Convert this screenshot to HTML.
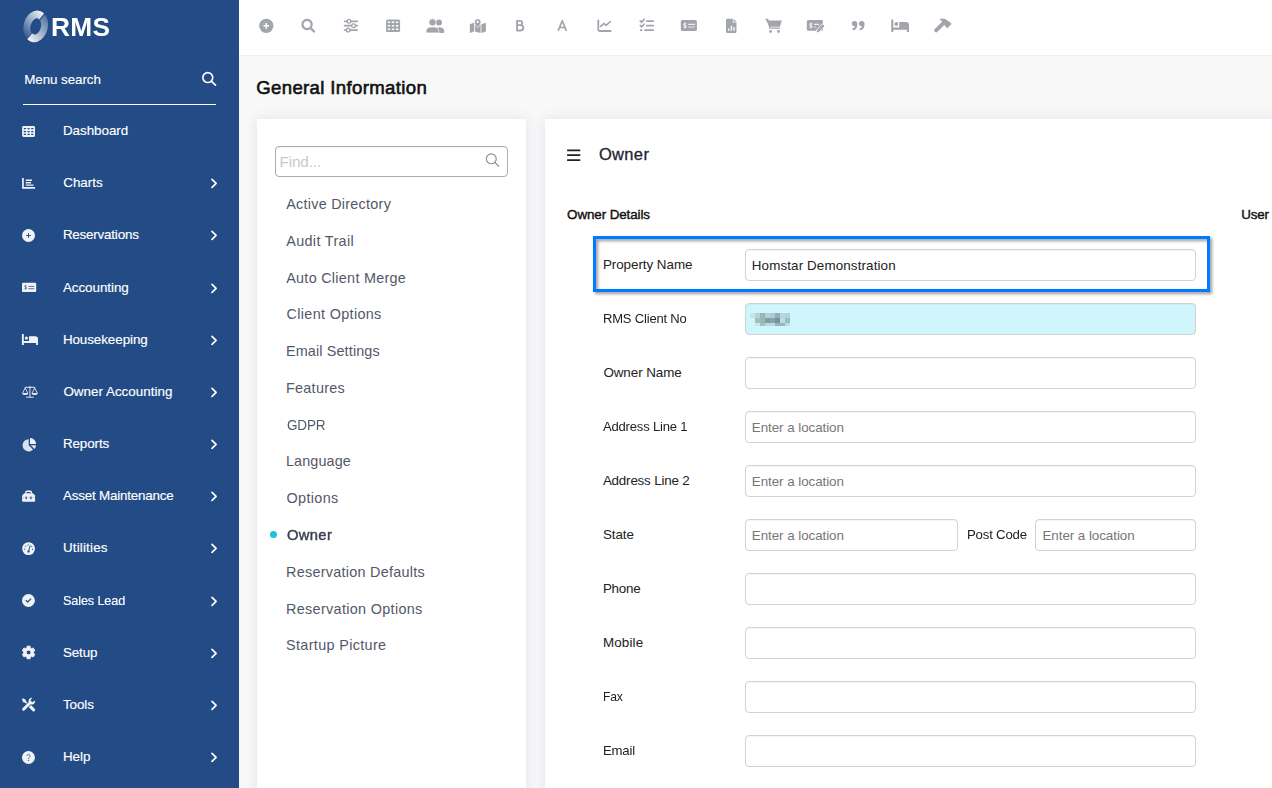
<!DOCTYPE html>
<html><head><meta charset="utf-8"><title>RMS</title>
<style>
html,body{margin:0;padding:0}
body{width:1272px;height:788px;overflow:hidden;position:relative;background:#f8f8f9;font-family:'Liberation Sans',sans-serif}
.t{position:absolute;transform-origin:0 50%;white-space:nowrap;line-height:20px;font-family:'Liberation Sans',sans-serif}
.abs{position:absolute}
#side{position:absolute;left:0;top:0;width:239px;height:788px;background:#234b85}
#bar{position:absolute;left:239px;top:0;width:1033px;height:55px;background:#fff;border-bottom:1px solid #eeeef3}
.panel{position:absolute;background:#fff;box-shadow:0 0 12px rgba(70,60,100,.12)}
.inp{position:absolute;height:30px;border:1px solid #d2d2d2;border-radius:4px;background:#fff;box-shadow:inset 0 1px 1px rgba(0,0,0,.04)}

</style></head>
<body>
<div id="side"></div>
<div id="bar"></div>
<div class="abs" style="left:23px;top:104px;width:193px;height:1px;background:#fff"></div>
<div class="panel" style="left:257px;top:119px;width:269px;height:700px"></div>
<div class="panel" style="left:545px;top:119px;width:760px;height:700px"></div>
<div class="inp" style="left:275px;top:146px;width:231px;height:29px;border-color:#adadad"></div>
<div class="inp" style="left:745px;top:249px;width:449px"></div>
<div class="inp" style="left:745px;top:303px;width:449px;background:#cff7fb;border-color:#cdd3d3"></div>
<div class="inp" style="left:745px;top:357px;width:449px"></div>
<div class="inp" style="left:745px;top:411px;width:449px"></div>
<div class="inp" style="left:745px;top:465px;width:449px"></div>
<div class="inp" style="left:745px;top:519px;width:211px"></div>
<div class="inp" style="left:1035px;top:519px;width:159px"></div>
<div class="inp" style="left:745px;top:573px;width:449px"></div>
<div class="inp" style="left:745px;top:627px;width:449px"></div>
<div class="inp" style="left:745px;top:681px;width:449px"></div>
<div class="inp" style="left:745px;top:735px;width:449px"></div>
<div class="abs" style="left:593px;top:236px;width:611px;height:50px;border:3px solid #007bff;filter:drop-shadow(2px 2px 1.700px rgba(0,0,0,.42))"></div>
<div class="abs" style="left:270.200px;top:531.300px;width:7.200px;height:7.200px;border-radius:50%;background:#17c5d6"></div>
<svg class="abs" style="left:0;top:0" width="239" height="788" viewBox="0 0 239 788" fill="#fff">
<defs>
<linearGradient id="lgA" gradientUnits="userSpaceOnUse" x1="42" y1="12" x2="25" y2="38"><stop offset="0" stop-color="#fff" stop-opacity=".97"/><stop offset=".4" stop-color="#fff" stop-opacity=".6"/><stop offset="1" stop-color="#fff" stop-opacity=".05"/></linearGradient>
<linearGradient id="lgB" gradientUnits="userSpaceOnUse" x1="29" y1="41" x2="47" y2="15"><stop offset="0" stop-color="#fff" stop-opacity=".98"/><stop offset=".5" stop-color="#fff" stop-opacity=".58"/><stop offset="1" stop-color="#fff" stop-opacity=".2"/></linearGradient>
<clipPath id="cpA"><path d="M0 0H51L51 4.300L39.600 19.300L31.700 32.700L20.500 46H0z"/></clipPath>
<clipPath id="cpB"><path d="M60 0H52.300L52.300 4.300L40.500 19.900L32.500 33L21.500 46H60z"/></clipPath>
</defs>
<g fill-rule="evenodd"><g clip-path="url(#cpA)"><path transform="rotate(14 35.700 26.400)" fill="url(#lgA)" d="M35.7 10.399999999999999a12.1 16.0 0 1 0 0 32.0a12.1 16.0 0 1 0 0 -32.0zM35.7 18.2a5.2 8.2 0 1 1 0 16.4a5.2 8.2 0 1 1 0 -16.4z"/></g><g clip-path="url(#cpB)"><path transform="rotate(14 35.700 26.400)" fill="url(#lgB)" d="M35.7 10.399999999999999a12.1 16.0 0 1 0 0 32.0a12.1 16.0 0 1 0 0 -32.0zM35.7 18.2a5.2 8.2 0 1 1 0 16.4a5.2 8.2 0 1 1 0 -16.4z"/></g></g>
<circle cx="207.800" cy="77.600" r="4.950" fill="none" stroke="#fff" stroke-width="1.600"/><path d="M211.500 81.300l4 3.900" stroke="#fff" stroke-width="1.700" stroke-linecap="round"/>
<path d="M212 179.3l4.100 4l-4.100 4" fill="none" stroke="#fff" stroke-width="1.700" stroke-linecap="round" stroke-linejoin="round"/>
<path d="M212 231.3l4.100 4l-4.100 4" fill="none" stroke="#fff" stroke-width="1.700" stroke-linecap="round" stroke-linejoin="round"/>
<path d="M212 284.3l4.100 4l-4.100 4" fill="none" stroke="#fff" stroke-width="1.700" stroke-linecap="round" stroke-linejoin="round"/>
<path d="M212 336.3l4.100 4l-4.100 4" fill="none" stroke="#fff" stroke-width="1.700" stroke-linecap="round" stroke-linejoin="round"/>
<path d="M212 388.3l4.100 4l-4.100 4" fill="none" stroke="#fff" stroke-width="1.700" stroke-linecap="round" stroke-linejoin="round"/>
<path d="M212 440.3l4.100 4l-4.100 4" fill="none" stroke="#fff" stroke-width="1.700" stroke-linecap="round" stroke-linejoin="round"/>
<path d="M212 492.3l4.100 4l-4.100 4" fill="none" stroke="#fff" stroke-width="1.700" stroke-linecap="round" stroke-linejoin="round"/>
<path d="M212 544.3l4.100 4l-4.100 4" fill="none" stroke="#fff" stroke-width="1.700" stroke-linecap="round" stroke-linejoin="round"/>
<path d="M212 597.3l4.100 4l-4.100 4" fill="none" stroke="#fff" stroke-width="1.700" stroke-linecap="round" stroke-linejoin="round"/>
<path d="M212 649.3l4.100 4l-4.100 4" fill="none" stroke="#fff" stroke-width="1.700" stroke-linecap="round" stroke-linejoin="round"/>
<path d="M212 701.3l4.100 4l-4.100 4" fill="none" stroke="#fff" stroke-width="1.700" stroke-linecap="round" stroke-linejoin="round"/>
<path d="M212 753.3l4.100 4l-4.100 4" fill="none" stroke="#fff" stroke-width="1.700" stroke-linecap="round" stroke-linejoin="round"/>
<g opacity=".93">
<path fill-rule="evenodd" d="M23.500 125.900h10.100a1.400 1.400 0 0 1 1.400 1.400v8.300a1.400 1.400 0 0 1-1.400 1.400h-10.100a1.400 1.400 0 0 1-1.400-1.400v-8.300a1.400 1.400 0 0 1 1.400-1.400z
M23.800 128h2.200v1.300h-2.200zM27.500 128h2.200v1.300h-2.200zM31.200 128h2.200v1.300h-2.200z
M23.800 130.900h2.200v1.300h-2.200zM27.500 130.900h2.200v1.300h-2.200zM31.200 130.900h2.200v1.300h-2.200z
M23.800 133.800h2.200v1.300h-2.200zM27.500 133.800h2.200v1.300h-2.200zM31.200 133.800h2.200v1.300h-2.200z"/>
<path d="M22.100 177.900h1.700v9.200h11.200v1.700h-12.900z"/><path d="M25.700 179.600h6.300v1.400h-6.300zM25.700 182h5.300v1.400h-5.300zM25.700 184.400h7.800v1.400h-7.800z"/>
<circle cx="28.500" cy="235.500" r="6.500"/><path d="M26.100 235.500h4.800M28.500 233.100v4.800" stroke="#234b85" stroke-width=".95" fill="none"/>
<rect x="22" y="282.800" width="14.200" height="9.300" rx="1.200"/><path d="M26.600 286c-.4-.5-2-.6-2 .4c0 1.100 2.100.5 2.100 1.700c0 1-1.700 1-2.300.4M25.600 285.100v4.600" fill="none" stroke="#234b85" stroke-width=".65" stroke-opacity=".8"/><path d="M28.400 286.400h5.900M28.400 288.700h5.900" stroke="#234b85" stroke-width=".85" stroke-opacity=".85" fill="none"/>
<path d="M21.900 334h1.900v7.100h14.200v3.900h-1.900v-1.900h-12.300v1.900h-1.900z"/><circle cx="26.400" cy="338.100" r="1.600"/><path d="M29 336.300h6.300a2.700 2.700 0 0 1 2.700 2.700v2.600h-9z"/>
<g fill="none" stroke="#fff" stroke-width=".95"><path d="M29.950 386v10.800M24.700 387.300h10.500M26.200 397.200h7.500"/><path d="M22.600 393l2.600-5l2.600 5M32.100 393l2.600-5l2.600 5" stroke-linejoin="round" stroke-width=".85"/></g>
<path d="M22.200 393h6a3 2.100 0 0 1-6 0zM31.700 393h6a3 2.100 0 0 1-6 0z" fill-opacity=".92"/>
<path d="M28.700 439.200v6.100l4.300 4.300a6.100 6.100 0 1 1-4.300-10.400z" fill-opacity=".9"/><path d="M30 437.900a6.100 6.100 0 0 1 6.100 6.100h-6.100z"/><path d="M30.700 445.300h5.400a6.100 6.100 0 0 1-1.600 3.800z" fill-opacity=".9"/>
<path d="M25.900 493.600v-1.300a1.100 1.100 0 0 1 1.100-1.100h3.200a1.100 1.100 0 0 1 1.100 1.100v1.300" fill="none" stroke="#fff" stroke-width="1.400"/><path d="M24.300 493.200h8.600l2.200 2.200v5.600a.8.800 0 0 1-.8.800h-11.400a.8.800 0 0 1-.8-.8v-5.600z"/><path d="M22.100 497.700h13" stroke="#234b85" stroke-width=".5" stroke-opacity=".4"/><path d="M26.200 496.500v2.700M30.900 496.500v2.700" stroke="#234b85" stroke-width="1.200"/>
<circle cx="28.550" cy="548.600" r="6.400"/><path d="M28.600 551.300l1.500-5.600" stroke="#234b85" stroke-width=".95" stroke-linecap="round"/><circle cx="28.550" cy="551.500" r="1.150" fill="#234b85"/><g fill="#234b85"><circle cx="24.600" cy="549.200" r=".6"/><circle cx="25.700" cy="546.200" r=".6"/><circle cx="28.100" cy="544.800" r=".6"/><circle cx="32.500" cy="549.200" r=".6"/><circle cx="31.700" cy="546.500" r=".6"/></g>
<circle cx="28.450" cy="600.450" r="6.450"/><path d="M26.100 600.500l1.600 1.500l3.100-3.100" fill="none" stroke="#234b85" stroke-width="1.200" stroke-linecap="round" stroke-linejoin="round"/>
<path d="M27.05 646.14L30.15 646.14L30.37 647.88L31.67 648.63L33.30 647.96L34.84 650.63L33.44 651.70L33.44 653.20L34.84 654.27L33.30 656.94L31.67 656.27L30.37 657.02L30.15 658.76L27.05 658.76L26.83 657.02L25.53 656.27L23.90 656.94L22.36 654.27L23.76 653.20L23.76 651.70L22.36 650.63L23.90 647.96L25.53 648.63L26.83 647.88z" stroke="#fff" stroke-width=".9" stroke-linejoin="round"/><circle cx="28.6" cy="652.45" r="1.900" fill="#234b85"/>
<path d="M23 699.400l5.200 5.200" stroke="#fff" stroke-width="1.700" stroke-linecap="round"/>
<path d="M22.200 699.400l1.100-1l2.300 1.300l.2 1.400l-1.300 1.300l-1.400-.2z"/>
<path d="M29.600 705.900l4 4" stroke="#fff" stroke-width="3.100" stroke-linecap="round"/>
<path d="M23.600 709.300l6.600-6.600" stroke="#234b85" stroke-width="4.300" stroke-linecap="round"/>
<path d="M23.600 709.300l6.800-6.800" stroke="#fff" stroke-width="3" stroke-linecap="round"/>
<path d="M35.100 700.600a3.300 3.300 0 1 1-2.700-2.700l-1.800 1.800l.4 1.800l1.800.4z"/>
<circle cx="28.450" cy="757.500" r="6.500"/><g opacity=".8"><path d="M26.900 756a1.600 1.600 0 1 1 2.400 1.400c-.6.400-.8.700-.8 1.500" fill="none" stroke="#234b85" stroke-width="1"/><circle cx="28.500" cy="760.400" r=".7" fill="#234b85"/></g>
</g>
</svg>
<svg class="abs" style="left:239px;top:0" width="1033" height="55" viewBox="239 0 1033 55" fill="#a2a5ab">
<!-- plus-circle -->
<circle cx="266.3" cy="25.85" r="7.15"/>
<path d="M263.5 25.85h5.6M266.3 23.05v5.6" stroke="#fff" stroke-width="1.5" fill="none"/>
<!-- search -->
<path transform="translate(301.4,18.8) scale(0.02734)" d="M505 442.700L405.300 343c-4.500-4.500-10.600-7-17-7H372c27.600-35.300 44-79.700 44-128C416 93.100 322.900 0 208 0S0 93.100 0 208s93.100 208 208 208c48.300 0 92.700-16.400 128-44v16.300c0 6.400 2.500 12.500 7 17l99.700 99.700c9.400 9.400 24.600 9.400 33.900 0l28.300-28.300c9.400-9.400 9.400-24.600.1-34zM208 336c-70.700 0-128-57.200-128-128 0-70.700 57.200-128 128-128 70.700 0 128 57.200 128 128 0 70.700-57.200 128-128 128z"/>
<!-- sliders -->
<g stroke="#a2a5ab" fill="none" stroke-linecap="round">
<path d="M344.6 21.3h12.6M344.6 25.7h12.6M344.6 30.1h12.6" stroke-width="1.7"/>
<g fill="#fff" stroke-width="1.35"><circle cx="349" cy="21.3" r="1.85"/><circle cx="353.6" cy="25.7" r="1.85"/><circle cx="348.2" cy="30.1" r="1.85"/></g>
</g>
<!-- table -->
<path fill-rule="evenodd" d="M387.5 19.4h11.100a1.500 1.500 0 0 1 1.500 1.500v9.500a1.500 1.500 0 0 1-1.500 1.500h-11.100a1.500 1.500 0 0 1-1.500-1.500v-9.500a1.500 1.500 0 0 1 1.500-1.500z
M387.7 21.6h2.400v1.500h-2.400zM391.800 21.6h2.400v1.500h-2.400zM395.900 21.6h2.400v1.500h-2.400z
M387.7 25h2.400v1.500h-2.400zM391.800 25h2.400v1.500h-2.400zM395.900 25h2.400v1.500h-2.400z
M387.7 28.5h2.400v1.500h-2.400zM391.800 28.5h2.400v1.500h-2.400zM395.900 28.5h2.400v1.500h-2.400z"/>
<!-- users -->
<circle cx="439" cy="22.6" r="3"/>
<path d="M437 27.400h3.400a3.800 3.800 0 0 1 3.800 3.800v1a.7.700 0 0 1-.7.700H437z"/>
<circle cx="432.5" cy="22.3" r="3.600" stroke="#fff" stroke-width=".7"/>
<path d="M426 32.900v-1.600a4.300 4.300 0 0 1 4.300-4.300h4.200a4.300 4.300 0 0 1 4.300 4.300v1.600z" stroke="#fff" stroke-width=".7"/>
<!-- map-marked -->
<path d="M469.800 24.200L474 22.700V31.400L469.800 32.900zM474.800 22.700L480.600 24.500V32.900L474.800 31.400zM481.400 24.300L485.900 22.700V31.400L481.400 32.900z"/>
<path d="M477.700 18.800a3.300 3.300 0 0 1 3.300 3.300c0 2-2.300 4.300-3.300 5.600c-1-1.300-3.300-3.600-3.300-5.600a3.300 3.300 0 0 1 3.300-3.300z" stroke="#fff" stroke-width=".7"/>
<circle cx="477.700" cy="21.900" r="1.150" fill="#fff"/>
<!-- B -->
<path d="M517.050 25.150V20.850h3.050a2.150 2.150 0 0 1 0 4.300H517.050h3.650a2.650 2.650 0 0 1 0 5.300H517.050z" fill="none" stroke="#a2a5ab" stroke-width="1.850" stroke-linejoin="round"/>
<!-- A -->
<path d="M558.100 30.900L562.250 20.700L566.400 30.900M559.700 27.500h5.100" fill="none" stroke="#a2a5ab" stroke-width="1.700" stroke-linejoin="round"/>
<!-- chart-line -->
<path d="M598.300 20.300v9.300a1.400 1.400 0 0 0 1.400 1.400h11" fill="none" stroke="#a2a5ab" stroke-width="1.800" stroke-linecap="round"/>
<path d="M600.700 26.400l3.300-3.100l2.100 2l4.200-3.800" fill="none" stroke="#a2a5ab" stroke-width="1.600" stroke-linecap="round" stroke-linejoin="round"/>
<!-- tasks -->
<g fill="none" stroke="#a2a5ab" stroke-linecap="round" stroke-linejoin="round">
<path d="M640.200 20.900l1.400 1.400l2.600-2.900M640.200 25.500l1.400 1.400l2.600-2.900" stroke-width="1.650"/>
<path d="M646.700 21.200h6.500M646.700 25.700h6.500M645 30.100h8.200" stroke-width="1.700"/>
</g>
<circle cx="641.100" cy="30.100" r="1.200"/>
<!-- money-check-alt -->
<rect x="680.800" y="20" width="16.100" height="11" rx="1.500"/>
<path d="M686.300 23.900c-.5-.6-2.600-.8-2.600.5c0 1.500 2.700.7 2.700 2.200c0 1.300-2.200 1.200-2.900.5M684.900 22.700v5.700" fill="none" stroke="#fff" stroke-width=".9"/>
<path d="M688.200 24.300h6.800" stroke="#fff" stroke-width="1" fill="none"/>
<path d="M688.200 27.100h6.800" stroke="#fff" stroke-opacity=".45" stroke-width="1.600" fill="none"/>
<!-- file-chart -->
<path d="M727.200 18.800h5.600v3.800h3.700v9.100a1.200 1.200 0 0 1-1.200 1.200h-8.100a1.200 1.200 0 0 1-1.200-1.200v-11.700a1.200 1.200 0 0 1 1.200-1.200zM733.600 18.800l2.900 3h-2.900z"/>
<path d="M728.800 30.700v-2.200M731.400 30.700v-5M734 30.700v-3.600" stroke="#fff" stroke-width="1.300" fill="none"/>
<!-- cart -->
<path d="M765.500 19.200h2.300l.5 1.200h13.500l-1.900 6.300h-10.200z"/>
<path d="M766 19.300h1.800l2 8.900h9.900" fill="none" stroke="#a2a5ab" stroke-width="1.200" stroke-linecap="round" stroke-linejoin="round"/>
<circle cx="770.600" cy="31.500" r="1.450"/><circle cx="778.500" cy="31.500" r="1.450"/>
<!-- money-check-edit -->
<rect x="806.800" y="20" width="16.200" height="10.800" rx="1.500"/>
<path d="M812.300 23.900c-.5-.6-2.600-.8-2.600.5c0 1.500 2.700.7 2.700 2.200c0 1.300-2.200 1.200-2.900.5M810.900 22.700v5.700" fill="none" stroke="#fff" stroke-width=".9"/>
<path d="M814 24.300h5" stroke="#fff" stroke-width="1" fill="none"/>
<path d="M814 27h2" stroke="#fff" stroke-opacity=".45" stroke-width="1.500" fill="none"/>
<path d="M822.500 23.700l2.500 2.300l-6 6.300l-3 .7l.6-3z" stroke="#fff" stroke-width=".9" stroke-linejoin="round"/>
<!-- quote-right -->
<circle cx="854.55" cy="23.600" r="2.700"/><path d="M857.25 23.600v1.300c0 3.200-1.700 5.200-4.600 5.400l-.35-1.700c1.700-.3 2.500-1.300 2.600-3z"/>
<circle cx="861.7" cy="23.600" r="2.700"/><path d="M864.4000000000001 23.600v1.300c0 3.200-1.700 5.200-4.600 5.400l-.35-1.700c1.700-.3 2.500-1.300 2.600-3z"/>
<!-- bed -->
<path d="M891.200 19.500h2.100v8h15.700v4.400h-2.100v-2.100h-13.600v2.100h-2.100z"/>
<circle cx="896.300" cy="24" r="1.900"/>
<path d="M899.200 22h6.800a3 3 0 0 1 3 3v3h-9.800z"/>
<!-- hammer -->
<g transform="translate(935.500,31.100) rotate(45)">
<path d="M0 -.9L0 -11.500" stroke="#a2a5ab" stroke-width="3.800" stroke-linecap="round" fill="none"/>
<path d="M-5.500-11.300C-4.400-14.400-1.800-15.900 1.400-15.900H2.100V-16.500H6.300V-10.300H2.100V-11C-.5-11.300-2.700-11.500-5.500-11.300z"/>
</g>
</svg>

<svg class="abs" style="left:545px;top:119px" width="727" height="669" viewBox="545 119 727 669">
<path d="M567.100 150.300h13.200M567.100 155.200h13.200M567.100 160.100h13.200" stroke="#222" stroke-width="1.700" fill="none"/>
<g shape-rendering="crispEdges"><rect x="750" y="313" width="5" height="5" fill="#c4e6e8"/><rect x="755" y="313" width="5" height="5" fill="#b0d6da"/><rect x="760" y="313" width="5" height="5" fill="#9fb4ba"/><rect x="765" y="313" width="5" height="5" fill="#afd2d8"/><rect x="770" y="313" width="5" height="5" fill="#abcbce"/><rect x="775" y="313" width="5" height="5" fill="#90afbc"/><rect x="780" y="313" width="5" height="5" fill="#b3d6d8"/><rect x="785" y="313" width="5" height="5" fill="#b0d4dc"/><rect x="755" y="318" width="5" height="5" fill="#a9bfae"/><rect x="760" y="318" width="5" height="5" fill="#9fb4ba"/><rect x="765" y="318" width="5" height="5" fill="#7a9fb4"/><rect x="770" y="318" width="5" height="5" fill="#8ea3a0"/><rect x="775" y="318" width="5" height="5" fill="#788f9e"/><rect x="780" y="318" width="5" height="5" fill="#b4e0ea"/><rect x="785" y="318" width="5" height="5" fill="#9abcc4"/><rect x="755" y="323" width="5" height="3" fill="#c4e8ee"/><rect x="760" y="323" width="5" height="3" fill="#a0c0c6"/><rect x="765" y="323" width="5" height="3" fill="#bcd9da"/><rect x="770" y="323" width="5" height="3" fill="#b4dae6"/><rect x="775" y="323" width="5" height="3" fill="#98b4bc"/><rect x="780" y="323" width="5" height="3" fill="#9cb4b2"/><rect x="785" y="323" width="5" height="3" fill="#b8e0ea"/></g>
</svg>
<svg class="abs" style="left:480px;top:150px" width="24" height="22" viewBox="480 150 24 22"><circle cx="491.300" cy="158.800" r="4.950" fill="none" stroke="#8c8c8c" stroke-width="1.150"/><path d="M494.900 162.400l3.900 4" stroke="#8c8c8c" stroke-width="1.250" stroke-linecap="round"/></svg>

<div class="t" style="left:24.2px;top:70px;font-size:13.4px;font-weight:400;color:#fff;letter-spacing:-0.07px;-webkit-text-stroke:0.12px #fff">Menu search</div>
<div class="t" style="left:62.9px;top:121px;font-size:13.4px;font-weight:400;color:#fff;letter-spacing:-0.02px;-webkit-text-stroke:0.15px #fff">Dashboard</div>
<div class="t" style="left:63.3px;top:173px;font-size:13.4px;font-weight:400;color:#fff;letter-spacing:-0.03px;-webkit-text-stroke:0.15px #fff">Charts</div>
<div class="t" style="left:62.9px;top:225px;font-size:13.4px;font-weight:400;color:#fff;letter-spacing:-0.2px;-webkit-text-stroke:0.15px #fff">Reservations</div>
<div class="t" style="left:62.9px;top:278px;font-size:13.4px;font-weight:400;color:#fff;letter-spacing:-0.04px;-webkit-text-stroke:0.15px #fff">Accounting</div>
<div class="t" style="left:62.9px;top:330px;font-size:13.4px;font-weight:400;color:#fff;letter-spacing:-0.07px;-webkit-text-stroke:0.15px #fff">Housekeeping</div>
<div class="t" style="left:63.4px;top:382px;font-size:13.4px;font-weight:400;color:#fff;letter-spacing:0.02px;-webkit-text-stroke:0.15px #fff">Owner Accounting</div>
<div class="t" style="left:62.9px;top:434px;font-size:13.4px;font-weight:400;color:#fff;letter-spacing:-0.09px;-webkit-text-stroke:0.15px #fff">Reports</div>
<div class="t" style="left:62.9px;top:486px;font-size:13.4px;font-weight:400;color:#fff;letter-spacing:-0.19px;-webkit-text-stroke:0.15px #fff">Asset Maintenance</div>
<div class="t" style="left:62.9px;top:538px;font-size:13.4px;font-weight:400;color:#fff;letter-spacing:0.18px;-webkit-text-stroke:0.15px #fff">Utilities</div>
<div class="t" style="left:63.0px;top:591px;font-size:13.4px;font-weight:400;color:#fff;letter-spacing:-0.2px;transform:scaleX(0.956);-webkit-text-stroke:0.15px #fff">Sales Lead</div>
<div class="t" style="left:62.9px;top:643px;font-size:13.4px;font-weight:400;color:#fff;letter-spacing:-0.1px;-webkit-text-stroke:0.15px #fff">Setup</div>
<div class="t" style="left:62.9px;top:695px;font-size:13.4px;font-weight:400;color:#fff;letter-spacing:-0.04px;-webkit-text-stroke:0.15px #fff">Tools</div>
<div class="t" style="left:62.9px;top:747px;font-size:13.4px;font-weight:400;color:#fff;letter-spacing:-0.03px;-webkit-text-stroke:0.15px #fff">Help</div>
<div class="t" style="left:50.7px;top:17px;font-size:25.2px;font-weight:700;color:#fff;letter-spacing:0.35px;transform:scaleX(1.043)">RMS</div>
<div class="t" style="left:256.2px;top:78px;font-size:18.6px;font-weight:400;color:#111;letter-spacing:0.35px;-webkit-text-stroke:0.6px #111">General Information</div>
<div class="t" style="left:286.2px;top:194px;font-size:14.4px;font-weight:400;color:#535868;letter-spacing:0.26px">Active Directory</div>
<div class="t" style="left:286.2px;top:231px;font-size:14.4px;font-weight:400;color:#535868;letter-spacing:0.35px">Audit Trail</div>
<div class="t" style="left:286.2px;top:268px;font-size:14.4px;font-weight:400;color:#535868;letter-spacing:0.28px">Auto Client Merge</div>
<div class="t" style="left:286.5px;top:304px;font-size:14.4px;font-weight:400;color:#535868;letter-spacing:0.34px">Client Options</div>
<div class="t" style="left:286.0px;top:341px;font-size:14.4px;font-weight:400;color:#535868;letter-spacing:0.13px">Email Settings</div>
<div class="t" style="left:286.0px;top:378px;font-size:14.4px;font-weight:400;color:#535868;letter-spacing:0.27px">Features</div>
<div class="t" style="left:286.5px;top:415px;font-size:14.4px;font-weight:400;color:#535868;letter-spacing:-0.2px;transform:scaleX(0.939)">GDPR</div>
<div class="t" style="left:286.0px;top:451px;font-size:14.4px;font-weight:400;color:#535868;letter-spacing:0.12px">Language</div>
<div class="t" style="left:286.5px;top:488px;font-size:14.4px;font-weight:400;color:#535868;letter-spacing:0.35px">Options</div>
<div class="t" style="left:286.5px;top:525px;font-size:14.4px;font-weight:400;color:#3d4250;letter-spacing:0.35px;transform:scaleX(1.023);-webkit-text-stroke:0.45px #3d4250">Owner</div>
<div class="t" style="left:286.0px;top:562px;font-size:14.4px;font-weight:400;color:#535868;letter-spacing:0.27px">Reservation Defaults</div>
<div class="t" style="left:286.0px;top:599px;font-size:14.4px;font-weight:400;color:#535868;letter-spacing:0.33px">Reservation Options</div>
<div class="t" style="left:286.0px;top:635px;font-size:14.4px;font-weight:400;color:#535868;letter-spacing:0.35px">Startup Picture</div>
<div class="t" style="left:279.5px;top:152px;font-size:15.4px;font-weight:400;color:#c9c9c9;letter-spacing:-0.2px">Find...</div>
<div class="t" style="left:598.9px;top:144px;font-size:16.5px;font-weight:400;color:#1f2430;letter-spacing:0.35px;-webkit-text-stroke:0.3px #1f2430">Owner</div>
<div class="t" style="left:567.1px;top:205px;font-size:13.4px;font-weight:400;color:#111;letter-spacing:-0.1px;-webkit-text-stroke:0.4px #111">Owner Details</div>
<div class="t" style="left:1241.2px;top:205px;font-size:13.4px;font-weight:400;color:#111;letter-spacing:-0.19px;-webkit-text-stroke:0.4px #111">User</div>
<div class="t" style="left:602.9px;top:255px;font-size:13.4px;font-weight:400;color:#222;letter-spacing:-0.04px">Property Name</div>
<div class="t" style="left:602.9px;top:309px;font-size:13.4px;font-weight:400;color:#222;letter-spacing:-0.2px;transform:scaleX(0.973)">RMS Client No</div>
<div class="t" style="left:603.4px;top:363px;font-size:13.4px;font-weight:400;color:#222;letter-spacing:-0.06px">Owner Name</div>
<div class="t" style="left:603.0px;top:417px;font-size:13.4px;font-weight:400;color:#222;letter-spacing:-0.2px;transform:scaleX(0.974)">Address Line 1</div>
<div class="t" style="left:602.9px;top:471px;font-size:13.4px;font-weight:400;color:#222;letter-spacing:-0.2px">Address Line 2</div>
<div class="t" style="left:602.9px;top:525px;font-size:13.4px;font-weight:400;color:#222;letter-spacing:-0.08px">State</div>
<div class="t" style="left:602.9px;top:579px;font-size:13.4px;font-weight:400;color:#222;letter-spacing:-0.2px">Phone</div>
<div class="t" style="left:602.9px;top:633px;font-size:13.4px;font-weight:400;color:#222;letter-spacing:0.17px">Mobile</div>
<div class="t" style="left:603.0px;top:687px;font-size:13.4px;font-weight:400;color:#222;letter-spacing:-0.2px;transform:scaleX(0.904)">Fax</div>
<div class="t" style="left:602.9px;top:741px;font-size:13.4px;font-weight:400;color:#222;letter-spacing:-0.2px;transform:scaleX(0.984)">Email</div>
<div class="t" style="left:966.7px;top:525px;font-size:13.4px;font-weight:400;color:#222;letter-spacing:-0.2px;transform:scaleX(0.986)">Post Code</div>
<div class="t" style="left:751.8px;top:256px;font-size:13.4px;font-weight:400;color:#222;letter-spacing:0.12px">Homstar Demonstration</div>
<div class="t" style="left:751.8px;top:418px;font-size:13.4px;font-weight:400;color:#777;letter-spacing:-0.06px">Enter a location</div>
<div class="t" style="left:751.8px;top:472px;font-size:13.4px;font-weight:400;color:#777;letter-spacing:-0.06px">Enter a location</div>
<div class="t" style="left:751.8px;top:526px;font-size:13.4px;font-weight:400;color:#777;letter-spacing:-0.06px">Enter a location</div>
<div class="t" style="left:1042.5px;top:526px;font-size:13.4px;font-weight:400;color:#777;letter-spacing:-0.06px">Enter a location</div>
</body></html>
